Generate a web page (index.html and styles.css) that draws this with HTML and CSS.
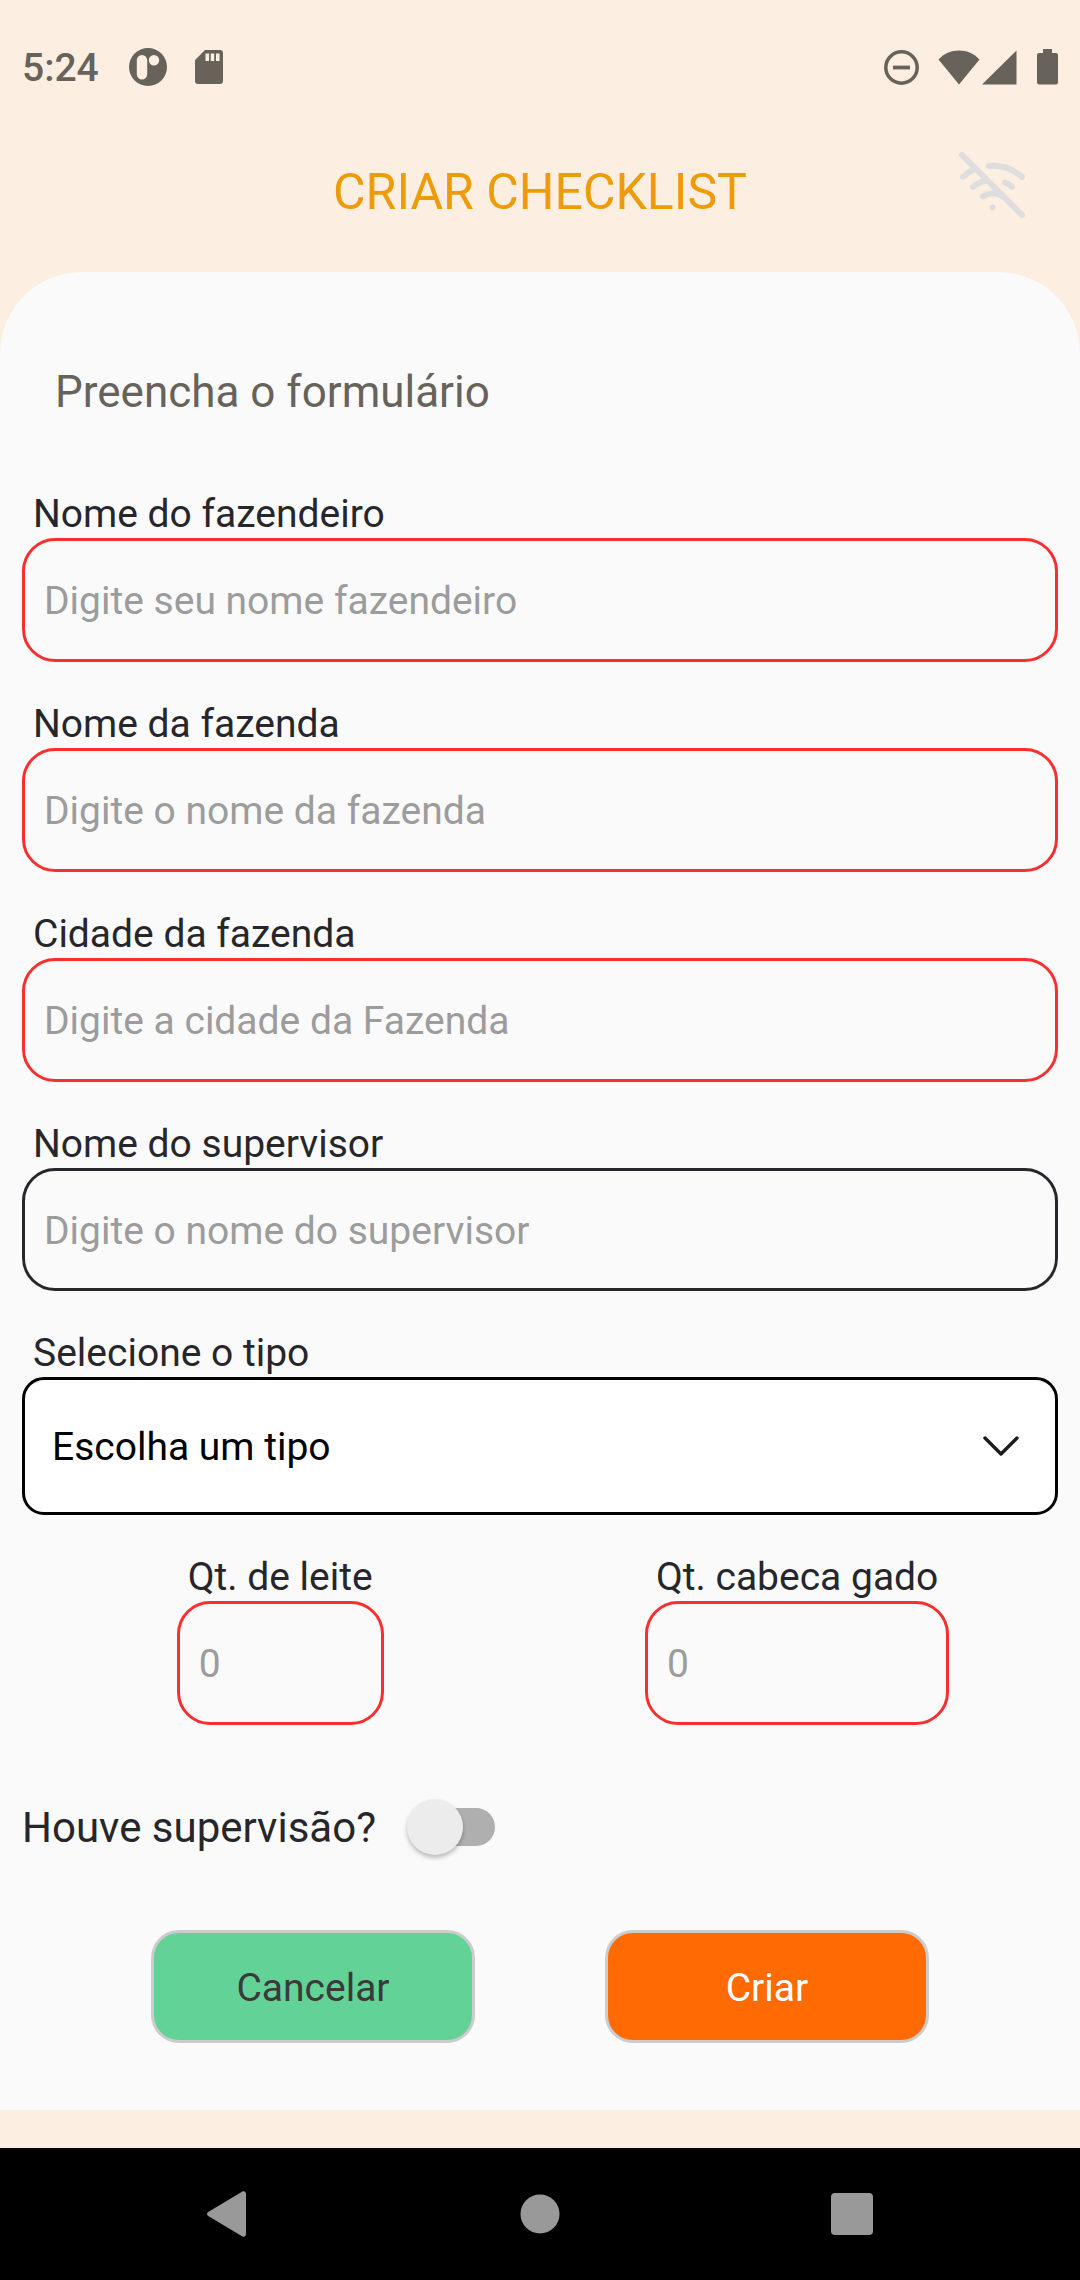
FILE: index.html
```html
<!DOCTYPE html>
<html lang="pt-BR">
<head>
  <meta charset="utf-8">
  <meta name="viewport" content="width=device-width, initial-scale=1">
  <title>Criar checklist</title>
  <link rel="stylesheet" href="styles.css">
</head>
<body class="screen">
  <div class="status-bar">
    <div class="status-group">
      <time class="clock">5:24</time>
      <svg class="icon-app" width="38" height="38" viewBox="0 0 38 38" aria-hidden="true">
        <path fill="currentColor" fill-rule="evenodd" d="M19 0a19 19 0 1 1 0 38a19 19 0 1 1 0-38zM13 7a5.200 5.200 0 0 0-5.200 5.200v14a5.200 5.200 0 0 0 10.400 0v-14A5.200 5.200 0 0 0 13 7zM25 7a5.200 5.200 0 1 0 0 10.400a5.200 5.200 0 1 0 0-10.400z"/>
      </svg>
      <svg class="icon-card" width="28" height="34" viewBox="0 0 28 34" aria-hidden="true">
        <path fill="currentColor" fill-rule="evenodd" d="M10 0h15a3 3 0 0 1 3 3v28a3 3 0 0 1-3 3H3a3 3 0 0 1-3-3V10zM10.500 3.500v7.500h3.500v-7.500zM15.700 3.500v7.500h3.500v-7.500zM21 3.500v7.500h3.500v-7.500z"/>
      </svg>
    </div>
    <div class="status-group">
      <svg class="icon-dnd" width="35" height="35" viewBox="0 0 35 35" aria-hidden="true">
        <circle cx="17.500" cy="17.500" r="15.700" fill="none" stroke="currentColor" stroke-width="3.500"/>
        <path d="M9 17.500h17" stroke="currentColor" stroke-width="3.800"/>
      </svg>
      <svg class="icon-wifi" width="42" height="35" viewBox="0 0 42 35" aria-hidden="true">
        <path fill="currentColor" d="M21 34.500L.5 9.500C6 3.500 13 .5 21 .5s15 3 20.500 9z"/>
      </svg>
      <svg class="icon-signal" width="35" height="35" viewBox="0 0 35 35" aria-hidden="true">
        <path fill="currentColor" d="M0 34.500L34.500 .5v34z"/>
      </svg>
      <svg width="21" height="36" viewBox="0 0 21 36" aria-hidden="true">
        <path fill="currentColor" d="M6 0h9v4h4a2 2 0 0 1 2 2v27.500a2 2 0 0 1-2 2H2a2 2 0 0 1-2-2V6a2 2 0 0 1 2-2h4z"/>
      </svg>
    </div>
  </div>

  <header class="app-bar">
    <h1 class="app-title">CRIAR CHECKLIST</h1>
    <svg class="offline" width="66" height="66" viewBox="0 0 66 66" role="img" aria-label="Sem conexão">
      <g fill="none" stroke="currentColor" stroke-width="6" stroke-linecap="round">
        <path d="M3 3L63 63"/>
        <path d="M30 14c12-1 24 3 33 11"/>
        <path d="M4 25c4-4 7-6 12-8"/>
        <path d="M46 30.500c3 1 5 2.500 7 4.200"/>
        <path d="M14 35c5-4 9-6 14-6.500"/>
        <path d="M24 44.500c6-4 14-4.500 21 .5"/>
      </g>
      <circle cx="33.500" cy="55.500" r="3" fill="currentColor"/>
    </svg>
  </header>

  <main class="sheet">
    <h2 class="sheet-title">Preencha o formulário</h2>
    <form class="form">
      <div class="field">
        <label class="label" for="fazendeiro">Nome do fazendeiro</label>
        <input class="input input-required" id="fazendeiro" type="text" placeholder="Digite seu nome fazendeiro">
      </div>
      <div class="field">
        <label class="label" for="fazenda">Nome da fazenda</label>
        <input class="input input-required" id="fazenda" type="text" placeholder="Digite o nome da fazenda">
      </div>
      <div class="field">
        <label class="label" for="cidade">Cidade da fazenda</label>
        <input class="input input-required" id="cidade" type="text" placeholder="Digite a cidade da Fazenda">
      </div>
      <div class="field">
        <label class="label" for="supervisor">Nome do supervisor</label>
        <input class="input" id="supervisor" type="text" placeholder="Digite o nome do supervisor">
      </div>
      <div class="field">
        <label class="label" for="tipo">Selecione o tipo</label>
        <div class="select-wrap">
          <select class="select" id="tipo">
            <option>Escolha um tipo</option>
          </select>
          <svg class="chevron" width="36" height="20" viewBox="0 0 36 20" aria-hidden="true">
            <path d="M2 2l16 16L34 2" fill="none" stroke="currentColor" stroke-width="3.400" stroke-linecap="round" stroke-linejoin="round"/>
          </svg>
        </div>
      </div>
      <div class="amounts">
        <div class="field">
          <label class="label" for="leite">Qt. de leite</label>
          <input class="input input-required" id="leite" type="text" inputmode="numeric" size="1" placeholder="0">
        </div>
        <div class="field">
          <label class="label" for="gado">Qt. cabeca gado</label>
          <input class="input input-required" id="gado" type="text" inputmode="numeric" size="1" placeholder="0">
        </div>
      </div>
      <div class="switch-row">
        <label class="switch-label" for="supervisao">Houve supervisão?</label>
        <input class="switch" id="supervisao" type="checkbox" role="switch">
      </div>
      <div class="actions">
        <button class="button button-cancel" type="button">Cancelar</button>
        <button class="button button-create" type="submit">Criar</button>
      </div>
    </form>
  </main>

  <nav class="nav-bar" aria-label="Sistema">
    <button class="nav-button" type="button" aria-label="Voltar">
      <svg width="42" height="46" viewBox="0 0 42 46"><path fill="currentColor" d="M1.200 21L35 .8c2-1.200 4 0 4 2v40.400c0 2-2 3.200-4 2L1.200 25c-1.600-1-1.600-3 0-4z"/></svg>
    </button>
    <button class="nav-button" type="button" aria-label="Início">
      <svg width="40" height="40" viewBox="0 0 40 40"><circle cx="20" cy="20" r="19.500" fill="currentColor"/></svg>
    </button>
    <button class="nav-button" type="button" aria-label="Recentes">
      <svg width="42" height="42" viewBox="0 0 42 42"><rect width="42" height="42" rx="4" fill="currentColor"/></svg>
    </button>
  </nav>
</body>
</html>
```
FILE: styles.css
```css
* {
  box-sizing: border-box;
}

.screen {
  display: flex;
  flex-direction: column;
  min-height: 100vh;
  margin: 0;
  background: #fceee1;
  color: #27262b;
  font-family: Roboto, sans-serif;
  font-size: 39px;
  line-height: 46px;
}

svg {
  display: block;
  flex: none;
}

/* Status bar */
.status-bar {
  display: flex;
  align-items: center;
  justify-content: space-between;
  height: 134px;
  padding: 0 22px;
  color: #67635b;
}

.status-group {
  display: flex;
  align-items: center;
}

.clock {
  padding-top: 2px;
  font-weight: 500;
}

.icon-app {
  margin: 0 28px 0 30px;
}

.icon-dnd {
  margin-right: 19px;
}

.icon-wifi {
  margin-right: 2px;
}

.icon-signal {
  margin-right: 20px;
}

/* Header */
.app-bar {
  display: grid;
  grid-template-columns: 66px 1fr 66px;
  align-items: start;
  padding: 18px 55px 40px;
}

.app-title {
  grid-column: 2;
  margin: 0;
  color: #ee9b09;
  font-size: 50px;
  font-weight: 400;
  line-height: 80px;
  text-align: center;
}

.offline {
  color: #dedede;
}

/* Form sheet */
.sheet {
  padding: 94px 22px 67px;
  border-radius: 82px 82px 0 0;
  background: #fafafa;
}

.sheet-title {
  margin: 0 33px 74px;
  color: #67635b;
  font-size: 44px;
  font-weight: 400;
  line-height: 52px;
}

.form {
  display: flex;
  flex-direction: column;
  gap: 40px;
}

.field {
  display: flex;
  flex-direction: column;
}

.label {
  padding: 0 11px 2px;
  line-height: 44px;
}

.input,
.select {
  width: 100%;
  margin: 0;
  border: 3px solid #27262b;
  color: inherit;
  font: inherit;
}

.input {
  height: 123px;
  padding: 2px 19px 0;
  border-radius: 33px;
  background: transparent;
}

.input-required {
  height: 124px;
  border-color: #f92f2f;
}

.input::placeholder {
  color: #9c9c9c;
  opacity: 1;
}

.select-wrap {
  display: grid;
  align-items: center;
}

.select,
.chevron {
  grid-area: 1 / 1;
}

.select {
  height: 138px;
  padding: 2px 90px 0 27px;
  border-color: #000;
  border-radius: 22px;
  background: #fff;
  color: #000;
  appearance: none;
}

.chevron {
  justify-self: end;
  margin-right: 39px;
  color: #1c1c1c;
  pointer-events: none;
}

.amounts {
  display: flex;
  justify-content: space-around;
  margin: 0 -22px 0 24px;
}

.switch-row {
  display: flex;
  align-items: center;
  gap: 35px;
  margin-top: 30px;
}

.switch-label {
  padding-top: 2px;
  font-size: 42px;
  line-height: 62px;
}

.switch {
  display: flex;
  align-items: center;
  width: 84px;
  height: 38px;
  margin: 0;
  border-radius: 19px;
  background: #afafaf;
  appearance: none;
}

.switch::before {
  flex: none;
  width: 56px;
  height: 56px;
  margin-left: -4px;
  border-radius: 50%;
  background: #ececec;
  box-shadow: 0 3px 4px rgba(0, 0, 0, 0.25);
  content: "";
}

.switch:checked {
  justify-content: flex-end;
}

.actions {
  display: flex;
  justify-content: center;
  gap: 130px;
  margin-top: 31px;
}

.button {
  flex: 0 1 324px;
  height: 113px;
  padding: 2px 0 0;
  border: 3px solid #ccc;
  border-radius: 28px;
  font: inherit;
}

.button-cancel {
  background: #62d296;
  color: #3a3a3a;
}

.button-create {
  background: #ff6a03;
  color: #fff;
}

/* System navigation */
.nav-bar {
  display: grid;
  grid-template-columns: repeat(3, 1fr);
  height: 132px;
  margin-top: auto;
  padding: 0 72px;
  background: #000;
}

.nav-button {
  display: grid;
  place-items: center;
  padding: 0;
  border: 0;
  background: none;
  color: #999;
}
```
